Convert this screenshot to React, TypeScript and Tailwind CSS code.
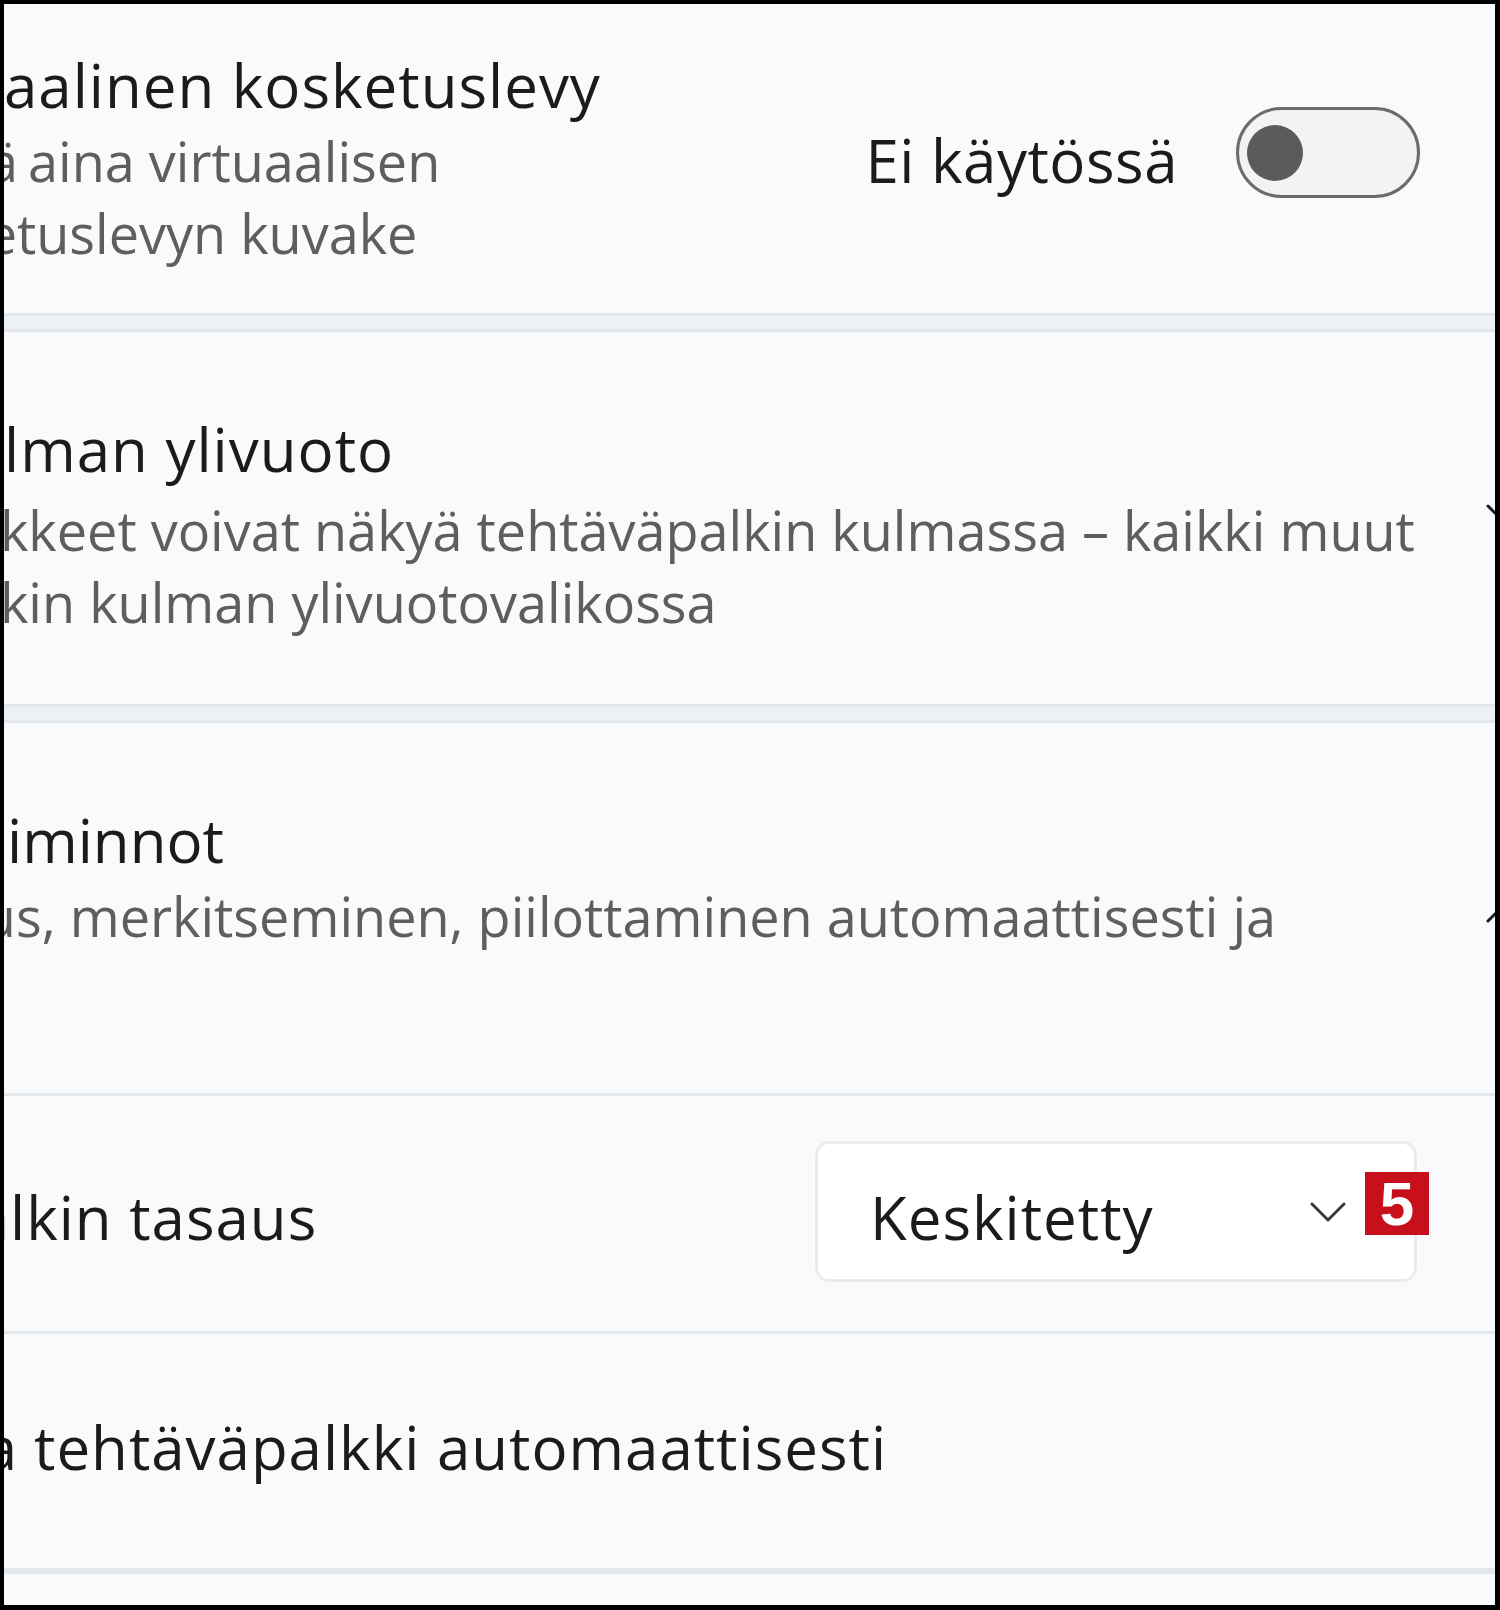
import React from "react";

function Clip({
  pre,
  text,
  className,
  textClass,
}: {
  pre: string;
  text: string;
  className: string;
  textClass: string;
}) {
  return (
    <div className={`flex whitespace-nowrap ${className}`}>
      <span className="flex w-0 shrink-0 justify-end">{pre}</span>
      <span className={textClass}>{text}</span>
    </div>
  );
}

export default function App() {
  return (
    <div className="h-[1610px] w-[1500px] overflow-hidden border-t-4 border-l-4 border-r-[5px] border-b-[5px] border-black bg-[#f9fafb] font-['Open_Sans',sans-serif] text-[#1b1b1b]">
      <div className="flex flex-col">
        {/* Card 1: virtual touchpad */}
        <div className="flex h-[309px] shrink-0">
          <div className="min-w-0 flex-1 pt-[41px]">
            <Clip
              pre="Virtu"
              text="aalinen kosketuslevy"
              className="text-[60px] leading-[80px] tracking-[1px]"
              textClass=""
            />
            <div className="text-[54px] leading-[72px] text-[#5e5e5e]">
              <Clip pre="Näytä" text="aina virtuaalisen" className="pl-[14px]" textClass="ml-[10px]" />
              <Clip pre="koske" text="tuslevyn kuvake" className="pl-[13px]" textClass="" />
            </div>
          </div>
          <div className="flex shrink-0 items-start gap-[58px] pr-[75px]">
            <span className="mt-[116px] text-[60px] leading-[80px] tracking-[0.5px]">Ei käytössä</span>
            <div className="mt-[103px] flex h-[91px] w-[184px] items-center rounded-full border-[3px] border-[#6b6b6b] bg-[#f3f3f3] pl-[8px]">
              <div className="h-[56px] w-[56px] rounded-full bg-[#5b5b5b]" />
            </div>
          </div>
        </div>

        <div className="h-[19px] shrink-0 border-y-[3px] border-[#e3e6ea] bg-[#eef1f4]" />

        {/* Card 2: taskbar corner overflow */}
        <div className="flex h-[372px] shrink-0">
          <div className="min-w-0 flex-1 pt-[77px]">
            <Clip
              pre="Tehtäväpalkin ku"
              text="lman ylivuoto"
              className="text-[60px] leading-[80px] tracking-[1px]"
              textClass=""
            />
            <div className="mt-[5px] text-[54px] leading-[72px] text-[#5e5e5e]">
              <Clip
                pre="Kuva"
                text="kkeet voivat näkyä tehtäväpalkin kulmassa – kaikki muut"
                className=""
                textClass="ml-[-4px]"
              />
              <Clip pre="tehtäväpal" text="kin kulman ylivuotovalikossa" className="" textClass="ml-[-4px]" />
            </div>
          </div>
          <svg className="mt-[172px] mr-[-25px] shrink-0" width="34" height="20" viewBox="0 0 34 20" fill="none">
            <path d="M2 2 L17 17 L32 2" stroke="#1b1b1b" strokeWidth="3" strokeLinecap="round" strokeLinejoin="round" />
          </svg>
        </div>

        <div className="h-[19px] shrink-0 border-y-[3px] border-[#e3e6ea] bg-[#eef1f4]" />

        {/* Card 3: taskbar behaviors (expanded) */}
        <div className="flex h-[370px] shrink-0">
          <div className="min-w-0 flex-1 pt-[77px]">
            <Clip
              pre="Tehtäväpalkin to"
              text="iminnot"
              className="text-[60px] leading-[80px]"
              textClass="ml-[3px]"
            />
            <div className="text-[54px] leading-[72px] text-[#5e5e5e]">
              <Clip
                pre="Tehtäväpalkin tasau"
                text="s, merkitseminen, piilottaminen automaattisesti ja"
                className="pl-[12px]"
                textClass=""
              />
              <Clip pre="useat näytöt" text="" className="" textClass="" />
            </div>
          </div>
          <svg className="mt-[180px] mr-[-25px] shrink-0" width="34" height="20" viewBox="0 0 34 20" fill="none">
            <path d="M2 18 L17 3 L32 18" stroke="#1b1b1b" strokeWidth="3" strokeLinecap="round" strokeLinejoin="round" />
          </svg>
        </div>

        <div className="h-[3px] shrink-0 bg-[#e6e9ec]" />

        {/* Row 4: taskbar alignment */}
        <div className="flex h-[235px] shrink-0 items-start">
          <div className="min-w-0 flex-1 pt-[81px]">
            <Clip
              pre="Tehtäväpa"
              text="lkin tasaus"
              className="pl-[6px] text-[60px] leading-[80px] tracking-[1px]"
              textClass=""
            />
          </div>
          <div className="shrink-0 pr-[78px]">
            <div className="relative mt-[45px] flex h-[141px] w-[602px] items-center justify-between rounded-[14px] border-[3px] border-[#ebebeb] bg-white pl-[52px] pr-[68px]">
              <span className="mt-[10px] text-[60px] leading-[80px] tracking-[1px]">Keskitetty</span>
              <svg width="36" height="20" viewBox="0 0 36 20" fill="none">
                <path d="M2 2 L18 18 L34 2" stroke="#3a3a3a" strokeWidth="3" strokeLinecap="round" strokeLinejoin="round" />
              </svg>
              <div className="absolute -right-[15px] top-[28px] flex h-[63px] w-[64px] items-center justify-center bg-[#c8101c] font-['Liberation_Sans',sans-serif] text-[62px] font-bold leading-none text-white">
                5
              </div>
            </div>
          </div>
        </div>

        <div className="h-[3px] shrink-0 bg-[#e6e9ec]" />

        {/* Row 5: auto-hide taskbar */}
        <div className="flex h-[234px] shrink-0">
          <div className="min-w-0 flex-1 pt-[73px]">
            <Clip
              pre="Piilota"
              text="tehtäväpalkki automaattisesti"
              className="pl-[14px] text-[60px] leading-[80px] tracking-[1px]"
              textClass="ml-[16px]"
            />
          </div>
        </div>

        <div className="h-[6px] shrink-0 bg-[#e4e8eb]" />
        <div className="h-[60px] shrink-0" />
      </div>
    </div>
  );
}
